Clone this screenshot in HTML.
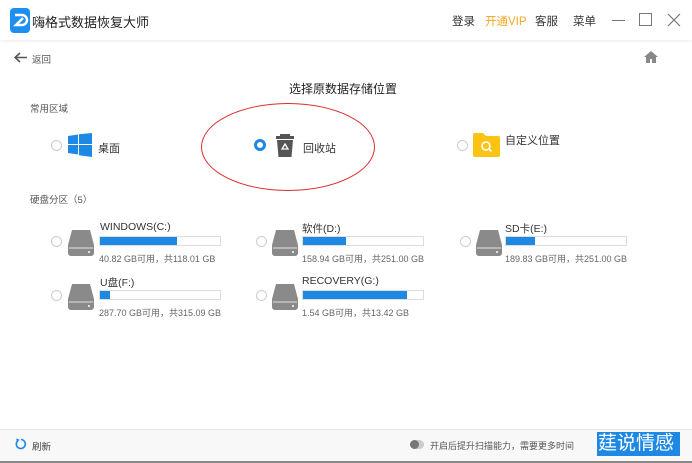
<html><head><style>
*{margin:0;padding:0;box-sizing:border-box}
body{width:692px;height:463px;background:#fff;font-family:"Liberation Sans","Noto Sans CJK SC",sans-serif;position:relative;overflow:hidden;color:#333}
.a{position:absolute;white-space:nowrap}
.r{position:absolute;width:11px;height:11px;border:1px solid #ccc;border-radius:50%;background:#fff}
.bar{position:absolute;height:10px;border:1px solid #ddd;background:#fff}
.bar i{display:block;height:100%;background:#1e88e5}
.s{font-size:9px;color:#666}
.n{font-size:10.5px;color:#333}
</style></head><body>
<div class="a" style="left:0;top:0;width:692px;height:40px;background:#fff;box-shadow:0 1px 3px rgba(0,0,0,.08)"></div>
<svg class="a" style="left:10px;top:8px" width="20" height="25" viewBox="0 0 20 25"><rect width="20" height="25" rx="4" fill="#1e8ff0"/><path d="M5 7h7a5 5 0 0 1 0 10H6l7-7" stroke="#fff" stroke-width="2.5" fill="none"/></svg>
<div class="a" style="left:32px;top:12px;font-size:13px;color:#222">嗨格式数据恢复大师</div>
<div class="a" style="left:452px;top:13px;font-size:11.5px">登录</div>
<div class="a" style="left:485px;top:13px;font-size:11.5px;color:#f5a623">开通VIP</div>
<div class="a" style="left:535px;top:13px;font-size:11.5px">客服</div>
<div class="a" style="left:573px;top:13px;font-size:11.5px">菜单</div>
<div class="a" style="left:612px;top:20px;width:13px;height:1px;background:#777"></div>
<div class="a" style="left:639px;top:13px;width:13px;height:13px;border:1px solid #777"></div>
<svg class="a" style="left:667px;top:13px" width="14" height="14"><path d="M1 1L13 13M13 1L1 13" stroke="#777" stroke-width="1.2"/></svg>
<svg class="a" style="left:14px;top:52px" width="14" height="11"><path d="M6 1L1 5.5L6 10M1 5.5H13" stroke="#555" stroke-width="1.6" fill="none"/></svg>
<div class="a" style="left:32px;top:52px;font-size:9.5px;color:#555">返回</div>
<svg class="a" style="left:644px;top:51px" width="14" height="12"><path d="M7 0L0 6h2v6h4V8h2v4h4V6h2z" fill="#888"/></svg>
<div class="a" style="left:289px;top:80px;font-size:12px;color:#222">选择原数据存储位置</div>
<div class="a" style="left:30px;top:101px;font-size:9.5px;color:#555">常用区域</div>
<div class="r" style="left:51px;top:140px"></div>
<svg class="a" style="left:68px;top:133px" width="24" height="24"><path d="M0 3l10-1.5V11H0zM11 1.3L24 0v11H11zM0 12h10v9.5L0 20zM11 12h13v12l-13-1.8z" fill="#1e88e5"/></svg>
<div class="a" style="left:98px;top:140px;font-size:11px">桌面</div>
<div class="a" style="left:201px;top:103px;width:174px;height:88px;border:1.5px solid #d9302c;border-radius:50%"></div>
<div class="a" style="left:254px;top:139px;width:12px;height:12px;border-radius:50%;border:3.5px solid #1e88e5;background:#fff"></div>
<svg class="a" style="left:275px;top:133px" width="20" height="25"><path d="M5 1h10v2H5z" fill="#555"/><path d="M1 3h18v3H1zM2 7h16l-1.5 17h-13z" fill="#555"/><path d="M10 11l3 5H7z" stroke="#fff" stroke-width="1.3" fill="none"/></svg>
<div class="a" style="left:303px;top:140px;font-size:11px">回收站</div>
<div class="r" style="left:457px;top:140px"></div>
<svg class="a" style="left:473px;top:133px" width="27" height="24"><path d="M0 2a2 2 0 0 1 2-2h8l3 3h12a2 2 0 0 1 2 2v17a2 2 0 0 1-2 2H2a2 2 0 0 1-2-2z" fill="#fdc312"/><circle cx="13" cy="13" r="4" stroke="#fff" stroke-width="1.6" fill="none"/><path d="M16 16l2.5 2.5" stroke="#fff" stroke-width="1.6"/></svg>
<div class="a" style="left:505px;top:132px;font-size:11px">自定义位置</div>
<div class="a" style="left:30px;top:192px;font-size:9.5px;color:#555">硬盘分区（5）</div>

<!-- drive template -->
<div class="r" style="left:51px;top:236px"></div>
<svg class="a" style="left:68px;top:230px" width="26" height="26"><path d="M4 0h18l4 15v8a3 3 0 0 1-3 3H3a3 3 0 0 1-3-3v-8z" fill="#8a8a8a"/><path d="M1 18h24" stroke="#fff" stroke-width=".8"/><circle cx="21" cy="22" r="1" fill="#fff"/></svg>
<div class="a n" style="left:100px;top:221px">WINDOWS(C:)</div>
<div class="bar" style="left:99px;top:236px;width:122px"><i style="width:64%"></i></div>
<div class="a s" style="left:99px;top:252px">40.82 GB可用，共118.01 GB</div>

<div class="r" style="left:256px;top:236px"></div>
<svg class="a" style="left:272px;top:230px" width="26" height="26"><path d="M4 0h18l4 15v8a3 3 0 0 1-3 3H3a3 3 0 0 1-3-3v-8z" fill="#8a8a8a"/><path d="M1 18h24" stroke="#fff" stroke-width=".8"/><circle cx="21" cy="22" r="1" fill="#fff"/></svg>
<div class="a n" style="left:302px;top:221px">软件(D:)</div>
<div class="bar" style="left:302px;top:236px;width:122px"><i style="width:36%"></i></div>
<div class="a s" style="left:302px;top:252px">158.94 GB可用，共251.00 GB</div>

<div class="r" style="left:460px;top:236px"></div>
<svg class="a" style="left:476px;top:230px" width="26" height="26"><path d="M4 0h18l4 15v8a3 3 0 0 1-3 3H3a3 3 0 0 1-3-3v-8z" fill="#8a8a8a"/><path d="M1 18h24" stroke="#fff" stroke-width=".8"/><circle cx="21" cy="22" r="1" fill="#fff"/></svg>
<div class="a n" style="left:505px;top:221px">SD卡(E:)</div>
<div class="bar" style="left:505px;top:236px;width:122px"><i style="width:24%"></i></div>
<div class="a s" style="left:505px;top:252px">189.83 GB可用，共251.00 GB</div>

<div class="r" style="left:51px;top:290px"></div>
<svg class="a" style="left:68px;top:284px" width="26" height="26"><path d="M4 0h18l4 15v8a3 3 0 0 1-3 3H3a3 3 0 0 1-3-3v-8z" fill="#8a8a8a"/><path d="M1 18h24" stroke="#fff" stroke-width=".8"/><circle cx="21" cy="22" r="1" fill="#fff"/></svg>
<div class="a n" style="left:100px;top:275px">U盘(F:)</div>
<div class="bar" style="left:99px;top:290px;width:122px"><i style="width:8%"></i></div>
<div class="a s" style="left:99px;top:306px">287.70 GB可用，共315.09 GB</div>

<div class="r" style="left:256px;top:290px"></div>
<svg class="a" style="left:272px;top:284px" width="26" height="26"><path d="M4 0h18l4 15v8a3 3 0 0 1-3 3H3a3 3 0 0 1-3-3v-8z" fill="#8a8a8a"/><path d="M1 18h24" stroke="#fff" stroke-width=".8"/><circle cx="21" cy="22" r="1" fill="#fff"/></svg>
<div class="a n" style="left:302px;top:275px">RECOVERY(G:)</div>
<div class="bar" style="left:302px;top:290px;width:122px"><i style="width:87%"></i></div>
<div class="a s" style="left:302px;top:306px">1.54 GB可用，共13.42 GB</div>

<div class="a" style="left:0;top:429px;width:692px;height:34px;background:#f8f8f8;border-top:1px solid #e5e5e5"></div>
<div class="a" style="left:0;top:461px;width:692px;height:2px;background:#888"></div>
<svg class="a" style="left:15px;top:438px" width="12" height="12"><path d="M3 2.5A4.5 4.5 0 1 0 6 1.5" stroke="#1e88e5" stroke-width="1.6" fill="none"/><path d="M1 0.5L4.5 1.5 2.5 4.5z" fill="#1e88e5"/></svg>
<div class="a" style="left:32px;top:439px;font-size:9.5px;color:#444">刷新</div>
<div class="a" style="left:410px;top:440px;width:14px;height:9px;border-radius:5px;background:#ccc"></div>
<div class="a" style="left:410px;top:440px;width:9px;height:9px;border-radius:50%;background:#777"></div>
<div class="a" style="left:430px;top:439px;font-size:9px;color:#555">开启后提升扫描能力，需要更多时间</div>
<div class="a" style="left:597px;top:432px;width:83px;height:24px;background:#1e88e5;color:#fff;font-size:19px;line-height:24px;padding-left:1px">莛说情感</div>
</body></html>
